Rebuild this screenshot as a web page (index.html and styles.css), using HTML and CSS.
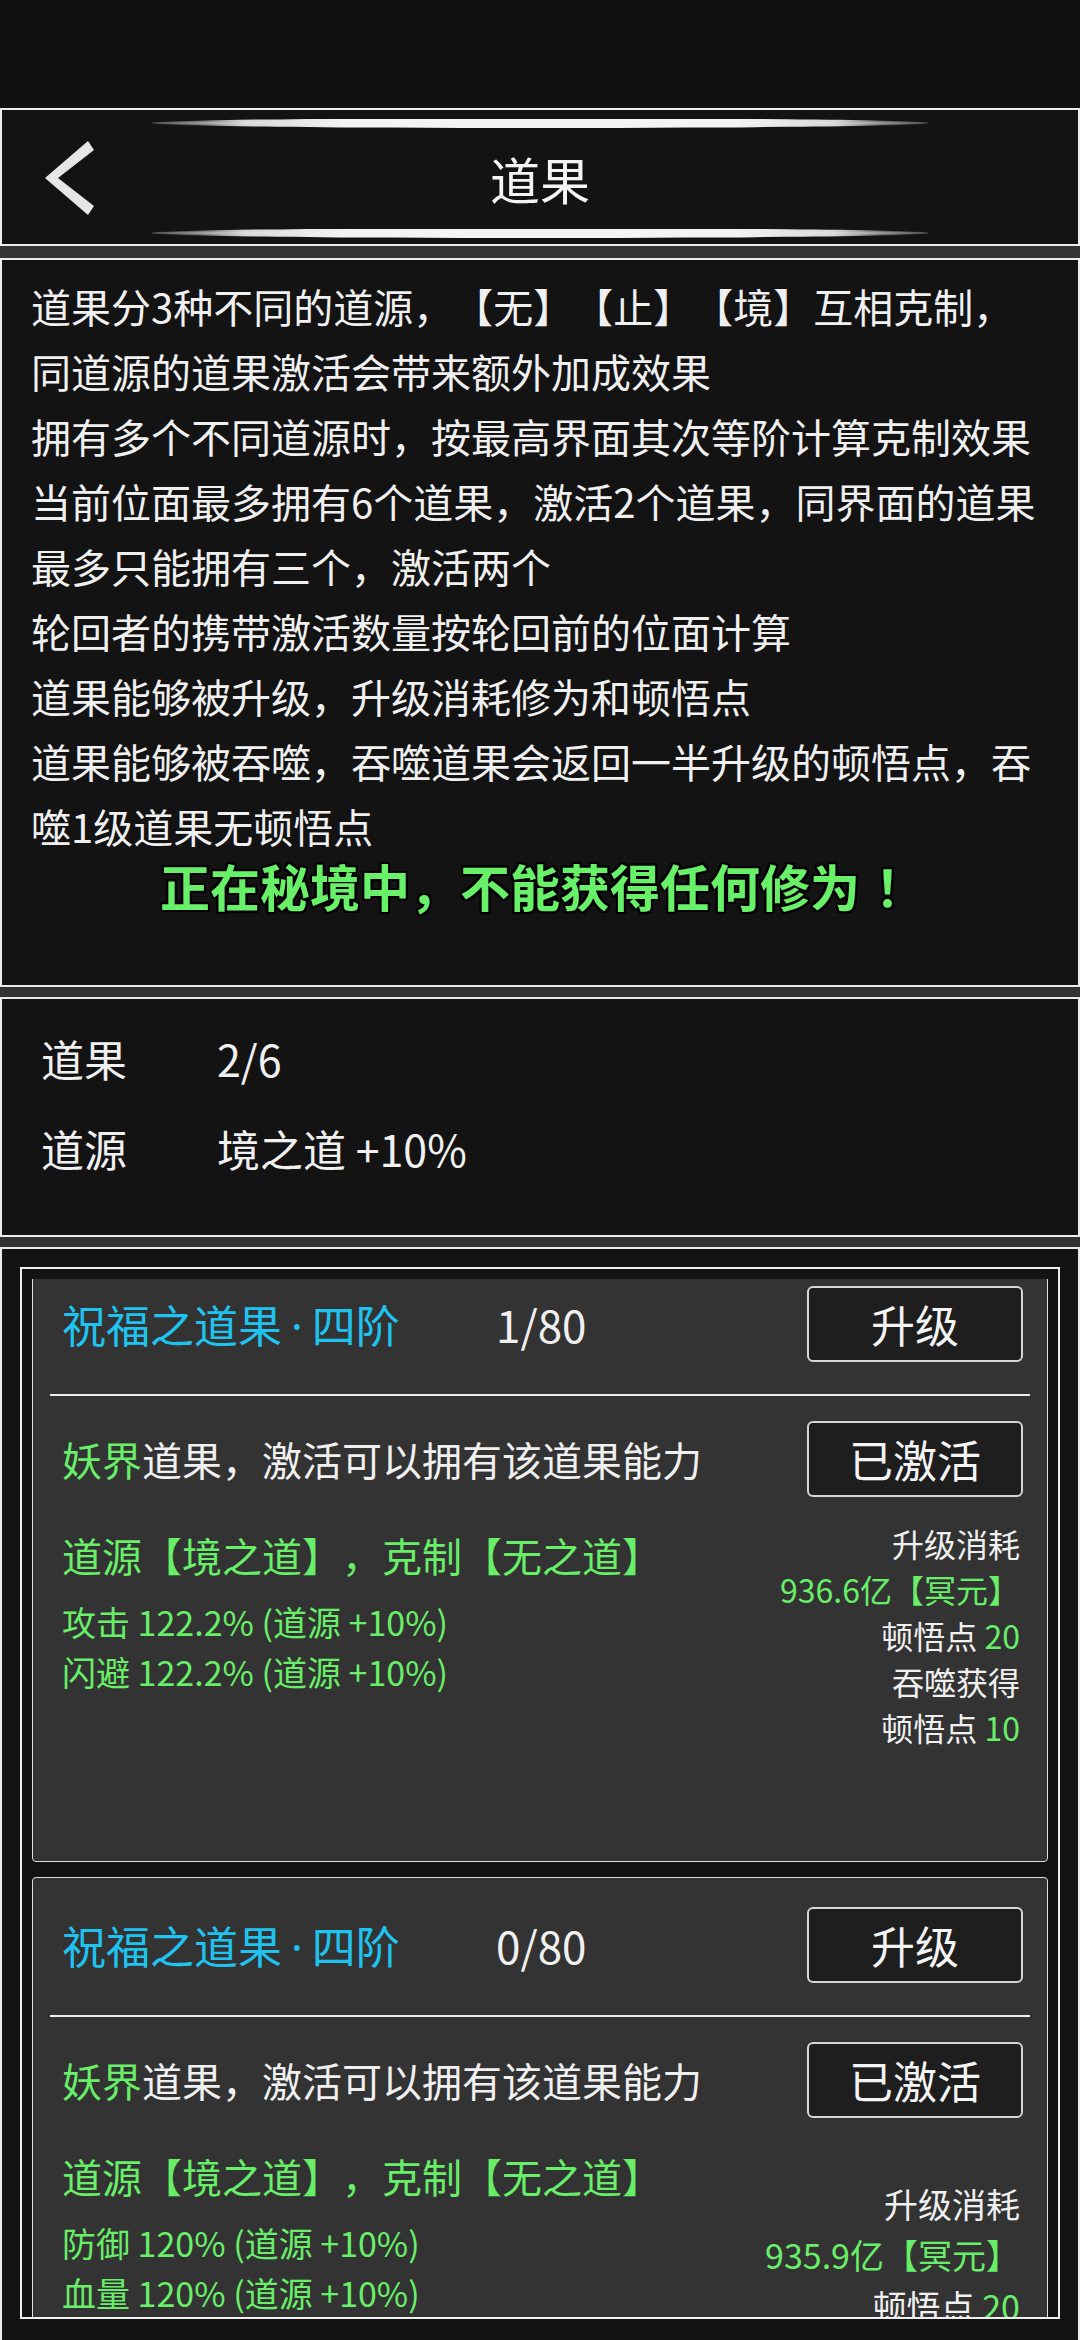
FILE: index.html
```html
<!DOCTYPE html>
<html lang="zh-CN">
<head>
    <meta charset="UTF-8">
    <meta name="viewport" content="width=device-width, initial-scale=1.0">
    <title>道果</title>
    <link rel="stylesheet" href="styles.css">
</head>
<body>
    <div class="statusbar"></div>

    <div class="panel header">
        <div class="glow"></div>
        <div class="header-row">
            <div class="back">
                <svg width="52" height="78" viewBox="0 0 52 78">
                    <polygon points="45,2 51,11 15,39 51,67 45,76 2,39" fill="#e6e6e6"/>
                </svg>
            </div>
            <h1>道果</h1>
            <div></div>
        </div>
        <div class="glow"></div>
    </div>

    <div class="panel desc">
        <p>道果分3种不同的道源，【无】【止】【境】互相克制，</p>
        <p>同道源的道果激活会带来额外加成效果</p>
        <p>拥有多个不同道源时，按最高界面其次等阶计算克制效果</p>
        <p>当前位面最多拥有6个道果，激活2个道果，同界面的道果</p>
        <p>最多只能拥有三个，激活两个</p>
        <p>轮回者的携带激活数量按轮回前的位面计算</p>
        <p>道果能够被升级，升级消耗修为和顿悟点</p>
        <p>道果能够被吞噬，吞噬道果会返回一半升级的顿悟点，吞</p>
        <p>噬1级道果无顿悟点</p>
        <p class="warning">正在秘境中，不能获得任何修为<span class="bang">！</span></p>
    </div>

    <div class="panel stats">
        <div class="stat-row">
            <span class="stat-label">道果</span>
            <span>2/6</span>
        </div>
        <div class="stat-row">
            <span class="stat-label">道源</span>
            <span>境之道 +10%</span>
        </div>
    </div>

    <div class="panel list">
        <div class="frame">
            <div class="viewport">
                <div class="card card-scrolled">
                    <div class="card-head">
                        <span class="card-title">祝福之道果<span class="dot">·</span>四阶</span>
                        <span>1/80</span>
                        <div class="btn">升级</div>
                    </div>
                    <div class="divider"></div>
                    <div class="card-row">
                        <span><span class="green">妖界</span>道果，激活可以拥有该道果能力</span>
                        <div class="btn">已激活</div>
                    </div>
                    <div class="card-body">
                        <div class="effects">
                            <p class="source green">道源【境之道】，克制【无之道】</p>
                            <p class="green">攻击 122.2% (道源 +10%)</p>
                            <p class="green">闪避 122.2% (道源 +10%)</p>
                        </div>
                        <div class="cost">
                            <p>升级消耗</p>
                            <p class="green">936.6亿【冥元】</p>
                            <p>顿悟点 <span class="green">20</span></p>
                            <p>吞噬获得</p>
                            <p>顿悟点 <span class="green">10</span></p>
                        </div>
                    </div>
                </div>

                <div class="card">
                    <div class="card-head">
                        <span class="card-title">祝福之道果<span class="dot">·</span>四阶</span>
                        <span>0/80</span>
                        <div class="btn">升级</div>
                    </div>
                    <div class="divider"></div>
                    <div class="card-row">
                        <span><span class="green">妖界</span>道果，激活可以拥有该道果能力</span>
                        <div class="btn">已激活</div>
                    </div>
                    <div class="card-body">
                        <div class="effects">
                            <p class="source green">道源【境之道】，克制【无之道】</p>
                            <p class="green">防御 120% (道源 +10%)</p>
                            <p class="green">血量 120% (道源 +10%)</p>
                        </div>
                        <div class="cost cost-large">
                            <p>升级消耗</p>
                            <p class="green">935.9亿【冥元】</p>
                            <p>顿悟点 <span class="green">20</span></p>
                        </div>
                    </div>
                </div>
            </div>
        </div>
    </div>
</body>
</html>
```

FILE: styles.css
```css
* {
    margin: 0;
    padding: 0;
    box-sizing: border-box;
}

body {
    width: 1080px;
    height: 2340px;
    overflow: hidden;
    background: #333333;
    color: #f0f0f0;
    font-family: "Noto Sans CJK SC", "Noto Sans", sans-serif;
    text-spacing-trim: space-all;
}

.statusbar {
    height: 108px;
    background: #111111;
}

.panel {
    background: #131313;
    border: 2px solid #ececec;
}

/* header */

.header {
    height: 138px;
    margin-bottom: 12px;
    display: flex;
    flex-direction: column;
}

.glow {
    height: 10px;
    margin: 8px auto 0;
    width: 778px;
    background:
        linear-gradient(to right, rgba(245, 245, 245, 0) 0%, rgba(235, 235, 235, 0.9) 12%, #f4f4f4 25%, #f4f4f4 75%, rgba(235, 235, 235, 0.9) 88%, rgba(245, 245, 245, 0) 100%) center / 100% 9px no-repeat,
        linear-gradient(#131313 40%, #4a4a4a 40%, #4a4a4a 62%, #131313 62%);
    border-radius: 50%;
}

.glow:last-child {
    margin: 0 auto 6px;
}

.header-row {
    flex: 1;
    display: grid;
    grid-template-columns: 1fr auto 1fr;
    align-items: center;
}

.back {
    margin-left: 41px;
    display: flex;
}

h1 {
    font-size: 50px;
    font-weight: 400;
    color: #f4f4f4;
    line-height: 1;
}

/* description */

.desc {
    height: 729px;
    margin-bottom: 10px;
    padding: 14px 10px 0 29px;
    font-size: 40px;
    line-height: 65px;
    white-space: nowrap;
}

.warning {
    margin-left: -29px;
    text-align: center;
    font-size: 50px;
    line-height: 52px;
    font-weight: 700;
    color: #68f068;
    text-shadow: 2px 0 #000, -2px 0 #000, 0 2px #000, 0 -2px #000, 2px 2px #000, -2px -2px #000, 2px -2px #000, -2px 2px #000;
}

.bang {
    display: inline-block;
    width: 1em;
    padding-left: 0.3em;
}

/* stats */

.stats {
    height: 240px;
    margin-bottom: 10px;
    padding: 14px 0 0 39px;
    font-size: 43px;
}

.stat-row {
    height: 90px;
    display: flex;
    align-items: center;
}

.stat-label {
    width: 176px;
}

/* list */

.list {
    height: 1093px;
    border-bottom: none;
    padding: 18px 18px 0;
}

.frame {
    height: 1052px;
    border: 2px solid #f0f0f0;
    padding: 10px 10px 0;
}

.viewport {
    height: 1038px;
    overflow: hidden;
}

.card {
    height: 606px;
    margin-top: 15px;
    background: #333333;
    border: 1px solid #dcdcdc;
    border-radius: 4px;
}

.card-scrolled {
    margin-top: -23px;
}

.card-head,
.card-row {
    display: flex;
    align-items: center;
    height: 76px;
    margin: 29px 24px 0 29px;
}

.card-head {
    font-size: 44px;
}

.card-row {
    margin-top: 25px;
    font-size: 40px;
}

.card-title {
    width: 434px;
    color: #1fc3f0;
}

.dot {
    font-family: "Noto Sans", sans-serif;
    margin: 0 9px;
}

.btn {
    margin-left: auto;
    width: 216px;
    height: 76px;
    background: #1e1e1e;
    border: 2px solid #d6d6d6;
    border-radius: 6px;
    display: flex;
    align-items: center;
    justify-content: center;
    font-size: 44px;
    color: #f4f4f4;
}

.divider {
    height: 2px;
    margin: 32px 17px 0;
    background: #eeeeee;
}

.card-body {
    display: flex;
    justify-content: space-between;
    margin: 0 27px 0 29px;
}

.effects {
    padding-top: 30px;
    font-size: 34px;
    line-height: 50px;
}

.effects .source {
    font-size: 40px;
    line-height: 56px;
    margin-bottom: 14px;
}

.cost {
    padding-top: 23px;
    text-align: right;
    font-size: 32px;
    line-height: 46px;
}

.cost-large {
    padding-top: 60px;
    font-size: 34px;
    line-height: 51px;
}

.green {
    color: #68ee68;
}
```
